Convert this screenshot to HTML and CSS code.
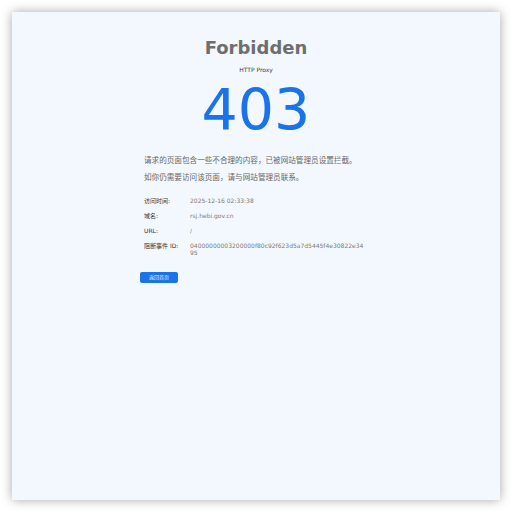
FILE: index.html
```html
<!DOCTYPE html>
<html lang="zh-CN">
<head>
<meta charset="utf-8">
<title>Forbidden</title>
<link rel="stylesheet" href="styles.css">
</head>
<body>
<div class="card">
  <h1 class="title">Forbidden</h1>
  <div class="sub">HTTP Proxy</div>
  <div class="code">403</div>
  <div class="content">
    <p class="msg">请求的页面包含一些不合理的内容，已被网站管理员设置拦截。<br>如你仍需要访问该页面，请与网站管理员联系。</p>
    <div class="info">
      <div class="row"><span class="label">访问时间:</span><span class="value">2025-12-16 02:33:38</span></div>
      <div class="row"><span class="label">域名:</span><span class="value">rsj.hebi.gov.cn</span></div>
      <div class="row"><span class="label">URL:</span><span class="value">/</span></div>
      <div class="row"><span class="label">阻断事件 ID:</span><span class="value">04000000003200000f80c92f623d5a7d5445f4e30822e3495</span></div>
    </div>
    <button class="btn">返回首页</button>
  </div>
</div>
</body>
</html>
```
FILE: styles.css
```css
* { box-sizing: border-box; }
html, body { margin: 0; padding: 0; background: #ffffff; }
body {
  font-family: "DejaVu Sans", "Noto Sans CJK SC", sans-serif;
  padding: 12px;
}
.card {
  height: 488px;
  background: #f3f8fe;
  box-shadow: 0 0 10px rgba(0, 0, 0, 0.35);
  padding-top: 25px;
  text-align: center;
}
.title {
  margin: 0;
  font-size: 18px;
  line-height: 22px;
  font-weight: bold;
  color: #6e6e6e;
}
.sub {
  margin-top: 7px;
  font-size: 6px;
  line-height: 8px;
  color: #3a3a3a;
}
.code {
  margin-top: 8px;
  font-size: 57px;
  line-height: 57px;
  color: #1a73e8;
}
.content {
  width: 232px;
  margin: 13px auto 0;
  text-align: left;
}
.msg {
  margin: 0;
  padding-left: 4px;
  font-size: 7.6px;
  line-height: 17px;
  color: #666;
}
.info {
  margin-top: 11px;
  padding-left: 4px;
  padding-right: 5px;
  display: flex;
  flex-direction: column;
  gap: 8px;
}
.row {
  display: flex;
  font-size: 6px;
  line-height: 7px;
}
.label {
  width: 46px;
  flex-shrink: 0;
  color: #333;
}
.value {
  flex: 1;
  color: #7a7a7a;
  word-break: break-all;
}
.btn {
  display: block;
  margin-top: 16px;
  width: 38px;
  height: 11px;
  padding: 0;
  border: none;
  border-radius: 2px;
  background: #1a73e8;
  color: #e8f0fd;
  font-family: "DejaVu Sans", "Noto Sans CJK SC", sans-serif;
  font-size: 5px;
  line-height: 11px;
}
```
